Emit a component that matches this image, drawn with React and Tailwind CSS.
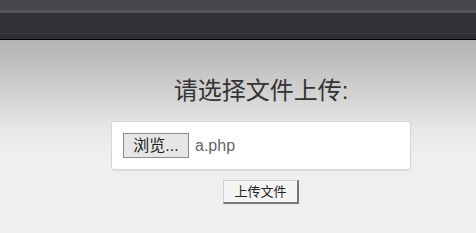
import React from "react";

const font = { fontFamily: '"Liberation Sans", "Noto Sans CJK SC", sans-serif' };

export default function App() {
  return (
    <div className="h-[233px] w-[476px] overflow-hidden bg-[#efefef]" style={font}>
      {/* top bar */}
      <div className="h-[10px] bg-[#48474d]" />
      <div className="h-[3px] bg-[#56555b]" />
      <div className="h-[20px] bg-[#323136]" />
      <div className="h-[6px] bg-[#2f2e33] border-t border-[#3a3a3d]" />
      <div className="h-px bg-black" />

      <div className="h-[193px] bg-gradient-to-b from-[#b3b3b3] via-[#e6e6e6] via-45% to-[#efefef] to-60% flex flex-col items-center">
        <h1 className="mt-[36px] ml-[46px] text-[24px] leading-[30px] text-[#333]">请选择文件上传:</h1>
        <div className="mt-[15px] w-[300px] h-[49px] ml-[46px] rounded-[3px] border border-[#d6d6d6] bg-white flex items-center px-[11px] shadow-[0_1px_1px_rgba(0,0,0,0.08)]">
          <button className="h-[25px] w-[66px] border border-[#8c8c8c] bg-[#e6e6e6] text-[16px] leading-none text-[#222]">
            浏览...
          </button>
          <span className="ml-[6px] text-[16px] text-[#666]">a.php</span>
        </div>
        <button className="mt-[10px] ml-[46px] h-[24px] w-[76px] border border-[#cfcfcf] border-r-[#777] border-b-[#777] border-b-2 border-r-2 bg-[#f4f4f4] text-[13px] leading-none text-[#222]">
          上传文件
        </button>
      </div>
    </div>
  );
}
